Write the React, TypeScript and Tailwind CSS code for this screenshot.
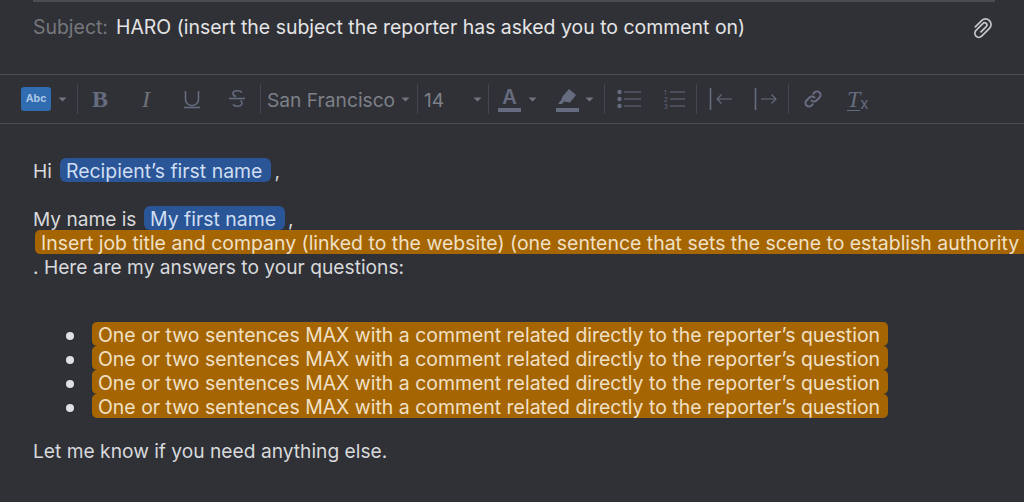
import React from "react";

const Caret = () => (
  <svg width="9" height="5" viewBox="0 0 9 5" className="shrink-0"><path d="M0.5 0.5h8L4.5 4.5z" fill="#6f7480" /></svg>
);

const Blue = ({ children }: { children: React.ReactNode }) => (
  <span className="inline-block h-[24px] rounded-[6px] bg-[#2a5596] pl-[6px] pr-[9px] text-[#cfdef3] leading-[26px]">{children}</span>
);

const Orange = ({ children }: { children: React.ReactNode }) => (
  <span className="block h-[24px] whitespace-nowrap rounded-[5px] bg-[#a56502] pl-[6px] pr-[8px] text-[#f0e0c6] leading-[26px]">{children}</span>
);

const Divider = () => <div className="h-[30px] w-px shrink-0 bg-[#44474d]" />;

const comment = "One or two sentences MAX with a comment related directly to the reporter’s question";

export default function App() {
  return (
    <div className="h-[502px] w-[1024px] overflow-hidden bg-[#303136] font-['Inter','Liberation_Sans',sans-serif] text-[19.45px] text-[#d8d9dc]">
      <div className="px-[33px]">
        <div className="h-[2px] w-[962px] bg-[#4c4d52]" />
        <div className="flex h-[50px] items-center justify-between pt-[2px]">
          <div className="flex items-center whitespace-nowrap">
            <span className="w-[83px] text-[#76777c]">Subject:</span>
            <span className="text-[#e4e4e6]">HARO (insert the subject the reporter has asked you to comment on)</span>
          </div>
          <svg className="-mr-[3px]" width="24" height="24" viewBox="-12 -12 24 24" fill="none" stroke="#c4c5c8" strokeWidth="1.7" strokeLinecap="round" strokeLinejoin="round">
            <path transform="rotate(45)" d="M-5.5 4V-5a5.5 5.5 0 0 1 11 0V6a4 4 0 0 1 -8 0V-4a2.25 2.25 0 0 1 4.5 0V3.5" />
          </svg>
        </div>
      </div>

      <div className="mt-[22px] flex h-[50px] items-center border-y border-[#4a4b50] text-[19.2px] text-[#7d8089]">
        <div className="ml-[21px] flex h-[24px] w-[30px] items-center justify-center rounded-[3px] bg-[#2f6cb0] text-[10.5px] font-bold text-[#a9c6e6]">Abc</div>
        <div className="ml-[7px]"><Caret /></div>
        <div className="ml-[10px]"><Divider /></div>
        <span className="ml-[14px] w-[16px] font-['Liberation_Serif',serif] text-[24px] font-bold leading-none text-[#666c80]">B</span>
        <span className="ml-[34px] w-[14px] font-['Liberation_Serif',serif] text-[24px] italic leading-none text-[#6e7178]">I</span>
        <svg className="ml-[27px]" width="18" height="20" viewBox="0 0 18 20" fill="none" stroke="#666c80" strokeWidth="1.6"><path d="M2.5 2v8.5a6.5 6 0 0 0 13 0V2" /><path d="M1 18.5h16" /></svg>
        <svg className="ml-[27px]" width="18" height="20" viewBox="0 0 18 20" fill="none" stroke="#666c80" strokeWidth="1.6"><path d="M14 3.5C12 1 5 1 5 4.5c0 1.5 1 2.5 3 3" /><path d="M1 9.5h16" /><path d="M5 15.5c2 2.5 9 2.5 9-1.5 0-1-.5-2-1.5-2.5" /></svg>
        <div className="ml-[14px]"><Divider /></div>
        <span className="ml-[6px] w-[134px] whitespace-nowrap pt-[2px] text-[#7d8089]">San Francisco</span>
        <Caret />
        <div className="ml-[7px]"><Divider /></div>
        <span className="ml-[6px] w-[49px] pt-[2px] text-[#7d8089]">14</span>
        <Caret />
        <div className="ml-[6px]"><Divider /></div>
        <div className="ml-[9px] flex w-[23px] flex-col items-center pt-[2px]">
          <span className="h-[18px] text-[20px] font-semibold leading-[18px] text-[#666c80]">A</span>
          <span className="mt-[2px] h-[4px] w-[23px] bg-[#666c80]" />
        </div>
        <div className="ml-[7px]"><Caret /></div>
        <div className="ml-[19px] flex w-[23px] flex-col items-center pt-[2px]">
          <svg width="22" height="18" viewBox="0 0 22 18"><path d="M12 1l7 6-6 7.5-6-1-2 2.5H1l3.5-4.5 1-3z" fill="#666c80" /></svg>
          <span className="mt-[2px] h-[4px] w-[23px] bg-[#666c80]" />
        </div>
        <div className="ml-[6px]"><Caret /></div>
        <div className="ml-[10px]"><Divider /></div>
        <svg className="ml-[12px]" width="24" height="20" viewBox="0 0 24 20" fill="#666c80"><circle cx="2.5" cy="3" r="2.2" /><circle cx="2.5" cy="10" r="2.2" /><circle cx="2.5" cy="17" r="2.2" /><rect x="7" y="2.5" width="17" height="1" /><rect x="7" y="9.5" width="17" height="1" /><rect x="7" y="16.5" width="17" height="1" /></svg>
        <svg className="ml-[23px]" width="21" height="20" viewBox="0 0 21 20" fill="#666c80"><rect x="6" y="2.5" width="15" height="1" /><rect x="6" y="9.5" width="15" height="1" /><rect x="6" y="16.5" width="15" height="1" /><text x="0" y="5.5" fontSize="6" fontFamily="Inter">1</text><text x="0" y="12.5" fontSize="6" fontFamily="Inter">2</text><text x="0" y="19.5" fontSize="6" fontFamily="Inter">3</text></svg>
        <div className="ml-[11px]"><Divider /></div>
        <svg className="ml-[12px]" width="24" height="22" viewBox="0 0 24 22" fill="none" stroke="#666c80"><path d="M1.5 0v22" strokeWidth="1.6" /><path d="M8 11h15M12.5 6.5L8 11l4.5 4.5" strokeWidth="1.1" /></svg>
        <svg className="ml-[21px]" width="24" height="22" viewBox="0 0 24 22" fill="none" stroke="#666c80"><path d="M1.5 0v22" strokeWidth="1.6" /><path d="M7 11h15M17.5 6.5L22 11l-4.5 4.5" strokeWidth="1.1" /></svg>
        <div className="ml-[10px]"><Divider /></div>
        <svg className="ml-[14px]" width="20" height="20" viewBox="0 0 20 20" fill="none" stroke="#666c80" strokeWidth="2" strokeLinecap="round"><path d="M8.5 11.5a3.5 3.5 0 0 0 5 0l3-3a3.5 3.5 0 0 0-5-5l-1.2 1.2" /><path d="M11.5 8.5a3.5 3.5 0 0 0-5 0l-3 3a3.5 3.5 0 0 0 5 5l1.2-1.2" /></svg>
        <div className="ml-[24px] flex items-start">
          <span className="border-b border-[#666c80] font-['Liberation_Serif',serif] text-[24px] italic leading-[22px] text-[#666c80]">T</span>
          <span className="mt-[9px] text-[15px] leading-[14px] text-[#666c80]">x</span>
        </div>
      </div>

      <div className="px-[33px] pt-[34px] leading-[26px] whitespace-nowrap">
        <div className="flex h-[24px] items-start text-[19.2px]">Hi<span className="ml-[8px] text-[19.45px]"><Blue>Recipient’s first name</Blue></span><span className="ml-[3px]">,</span></div>
        <div className="mt-[24px] flex h-[24px] items-start"><span className="w-[111px] text-[19.1px]">My name is</span><Blue>My first name</Blue><span className="ml-[3px]">,</span></div>
        <div className="ml-[2px] w-fit"><Orange>Insert job title and company (linked to the website) (one sentence that sets the scene to establish authority</Orange></div>
        <div className="h-[24px] text-[19.2px]">. Here are my answers to your questions:</div>
        <ul className="mt-[44px] ml-[59px] w-fit">
          {[0, 1, 2, 3].map((i) => (
            <li key={i} className="relative">
              <span className="absolute left-[-26px] top-[10px] h-[8px] w-[8px] rounded-full bg-[#dfe0e4]" />
              <Orange>{comment}</Orange>
            </li>
          ))}
        </ul>
        <div className="mt-[20px] text-[19.2px]">Let me know if you need anything else.</div>
      </div>
    </div>
  );
}
